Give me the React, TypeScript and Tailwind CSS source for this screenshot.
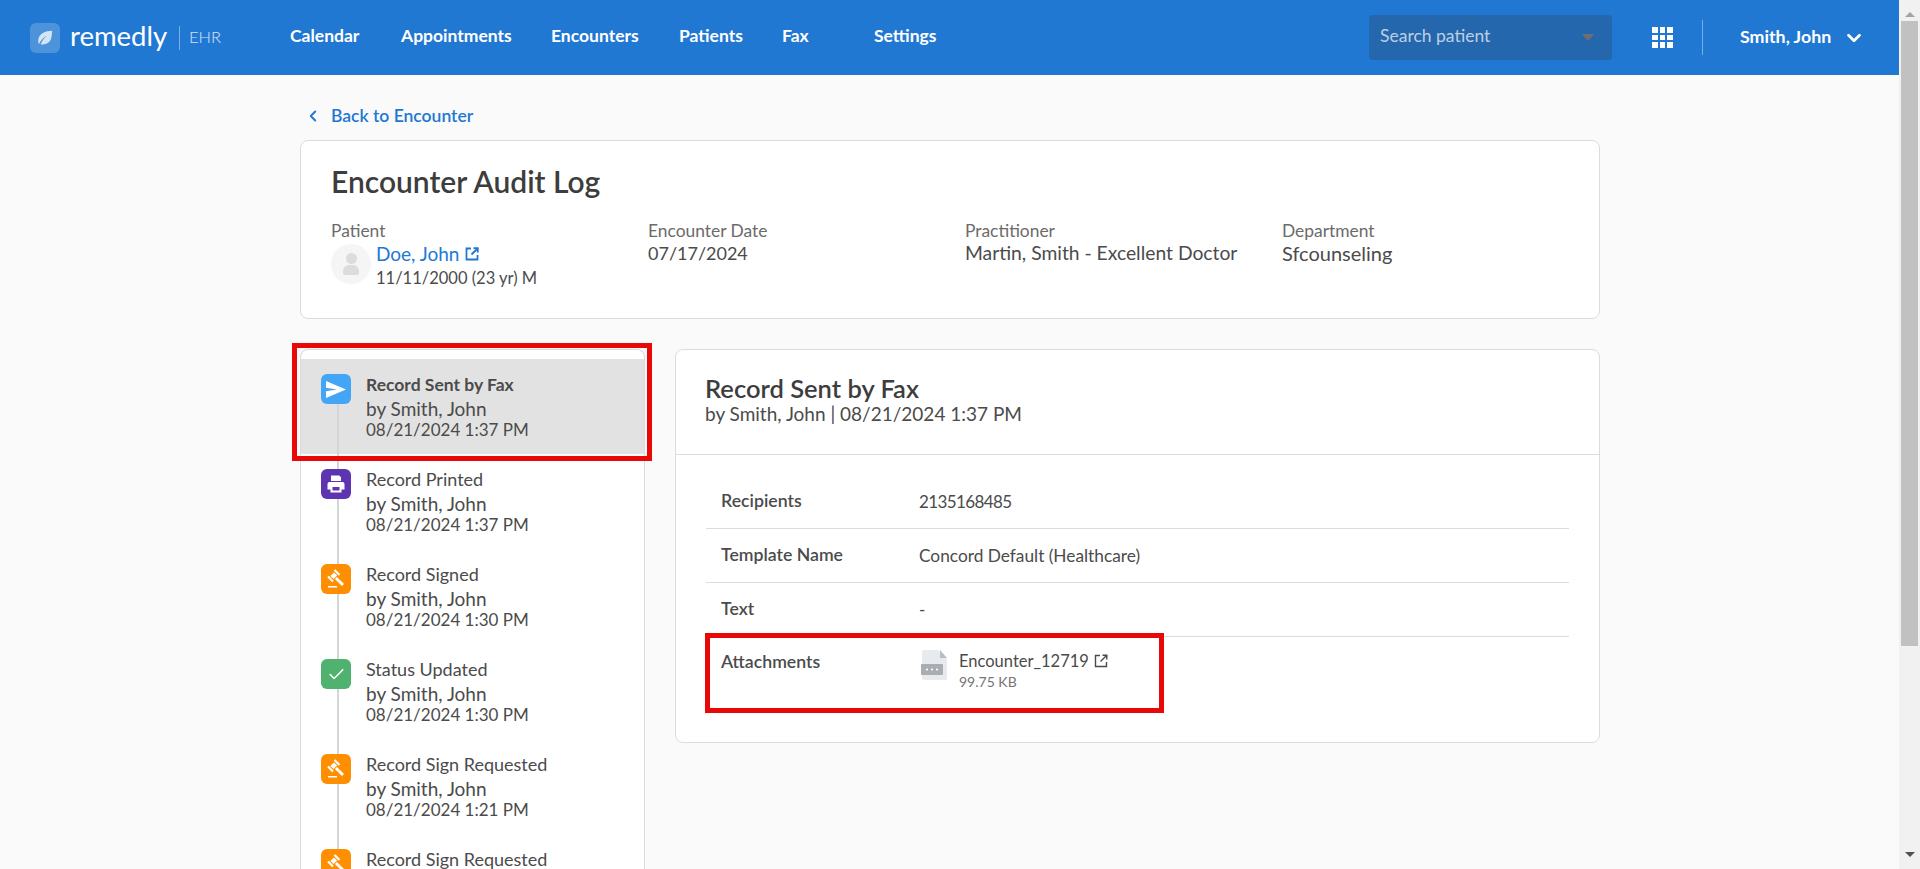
import { ChevronDown, ChevronLeft, Check } from 'lucide-react';

const navItems = [
  { label: 'Calendar', cls: 'w-[111px]' },
  { label: 'Appointments', cls: 'w-[150px]' },
  { label: 'Encounters', cls: 'w-[128px]' },
  { label: 'Patients', cls: 'w-[103px]' },
  { label: 'Fax', cls: 'w-[92px]' },
  { label: 'Settings', cls: 'w-[80px]' },
];

const SendIcon = () => (
  <svg viewBox="0 0 20 17" className="w-5 h-[17px]" fill="#fff">
    <path d="M0 0 20 8.500 0 17 0 10.300 11 8.500 0 6.700z" />
  </svg>
);

const PrintIcon = () => (
  <svg viewBox="0 0 20 20" className="w-5 h-5" fill="#fff">
    <path d="M5 1.500h8.200L15 3.300V7H5z" />
    <path fillRule="evenodd" d="M3.500 8h13A2 2 0 0 1 18.500 10v5.500h-3V18.500h-11V15.500h-3V10a2 2 0 0 1 2-2zM6.500 13v3.500h7V13z" />
  </svg>
);

const GavelIcon = () => (
  <svg viewBox="0 0 20 20" className="w-5 h-5" fill="#fff">
    <rect x="7.500" y="2.400" width="7" height="2.200" transform="rotate(45 11 3.500)" />
    <rect x="1" y="8.900" width="7" height="2.200" transform="rotate(45 4.500 10)" />
    <rect x="5.500" y="4.250" width="4.500" height="5" transform="rotate(45 7.750 6.750)" />
    <rect x="8.450" y="11" width="10" height="2.900" transform="rotate(45 13.450 12.450)" />
    <rect x="2" y="17" width="9" height="1.500" />
  </svg>
);

const ExternalIcon = ({ color, size, stroke }: { color: string; size: string; stroke: number }) => (
  <svg viewBox="0 0 14 14" className={size} stroke={color} strokeWidth={stroke} fill="none">
    <path d="M6 1.500H1.500v11h11V8" />
    <path d="M6.500 7.500 12.500 1.500M8.500 1.200h4.300v4.300" />
  </svg>
);

const events = [
  { title: 'Record Sent by Fax', time: '08/21/2024 1:37 PM', bg: 'bg-[#42a5f5]', icon: <SendIcon />, active: true },
  { title: 'Record Printed', time: '08/21/2024 1:37 PM', bg: 'bg-[#5e35b1]', icon: <PrintIcon /> },
  { title: 'Record Signed', time: '08/21/2024 1:30 PM', bg: 'bg-[#ff8f00]', icon: <GavelIcon /> },
  { title: 'Status Updated', time: '08/21/2024 1:30 PM', bg: 'bg-[#4fb26f]', icon: <Check className="w-[19px] h-[19px] text-white" strokeWidth={2} /> },
  { title: 'Record Sign Requested', time: '08/21/2024 1:21 PM', bg: 'bg-[#ff8f00]', icon: <GavelIcon /> },
  { title: 'Record Sign Requested', time: '08/21/2024 1:21 PM', bg: 'bg-[#ff8f00]', icon: <GavelIcon /> },
];

const details = [
  { label: 'Recipients', value: '2135168485', cls: 'text-[17px] tracking-[-0.6px]' },
  { label: 'Template Name', value: 'Concord Default (Healthcare)', cls: 'text-[17.300px]' },
  { label: 'Text', value: '-', cls: 'text-[17px]' },
];

const Header = () => (
  <header className="h-[75px] shrink-0 bg-[#2178d2] flex items-center text-white">
    <div className="w-[30px] h-[30px] ml-[30px] rounded-[6px] bg-white/20 flex items-center justify-center">
      <svg viewBox="0 0 20 20" className="w-[18px] h-[18px]" fill="#fff" fillOpacity={0.75}>
        <path d="M18 2C10 2 3.500 5 2.500 12c-.2 1.600 0 3.300.7 5 2-4.500 5-7.500 9-9.500-3 2.500-5.500 5.500-7 9.500 6 1 11-2 12-8 .4-2.300.6-4.700.8-7z" />
      </svg>
    </div>
    <span className="ml-[10px] w-[109px] text-[27.500px] leading-none font-normal pb-[3px]">remedly</span>
    <div className="w-px h-[24px] bg-white/40" />
    <span className="ml-[9px] w-[101px] text-[16.500px] font-light text-white/80">EHR</span>
    <nav className="flex">
      {navItems.map((n) => (
        <a key={n.label} className={`${n.cls} text-[17.500px] font-bold pb-[2px] cursor-pointer`}>{n.label}</a>
      ))}
    </nav>
    <div className="ml-[415px] w-[243px] h-[45px] rounded-[4px] bg-[#2467ad] flex items-center justify-between pl-[11px] pr-[18px]">
      <span className="text-[17.500px] text-white/70 pb-[2px]">Search patient</span>
      <span className="w-0 h-0 border-x-[6px] border-x-transparent border-t-[7px] border-t-[#6e6e6e]" />
    </div>
    <div className="ml-[40px] w-[21px] grid grid-cols-3 gap-[2px]">
      {Array.from({ length: 9 }).map((_, i) => (
        <span key={i} className="h-[5.400px] bg-white" />
      ))}
    </div>
    <div className="ml-[29px] w-px h-[35px] bg-white/40" />
    <span className="ml-[37px] text-[17.800px] font-bold pb-[2px]">Smith, John</span>
    <ChevronDown className="ml-[12px] w-[22px] h-[22px] text-white" strokeWidth={3} />
  </header>
);

const SummaryCard = () => (
  <section className="h-[179px] rounded-[8px] border border-[#dcdcdc] bg-white pl-[30px] pt-[21px]">
    <h1 className="text-[30px] leading-[38px] font-semibold text-[#3d3d3d]">Encounter Audit Log</h1>
    <div className="mt-[21px] grid grid-cols-[317px_317px_317px_1fr] text-[#4b4b4b]">
      <div>
        <div className="text-[17.400px] leading-[20px] text-[#6b6b6b]">Patient</div>
        <div className="flex gap-[5px]">
          <div className="w-[40px] h-[40px] mt-[3px] rounded-full bg-[#f5f5f5] flex flex-col items-center justify-center">
            <span className="w-[11px] h-[11px] rounded-full bg-[#dcdcdc]" />
            <span className="w-[16px] h-[10px] mt-[1px] rounded-t-[6px] rounded-b-[2px] bg-[#dcdcdc]" />
          </div>
          <div className="pt-[1px]">
            <div className="flex items-center gap-[6px] text-[19px] leading-[24px] text-[#2178d2]">
              Doe, John
              <ExternalIcon color="#2178d2" size="w-[14px] h-[14px]" stroke={1.800} />
            </div>
            <div className="text-[16.500px] leading-[25px]">11/11/2000 (23 yr) M</div>
          </div>
        </div>
      </div>
      <div>
        <div className="text-[17.400px] leading-[20px] text-[#6b6b6b]">Encounter Date</div>
        <div className="text-[18px] leading-[24px]">07/17/2024</div>
      </div>
      <div>
        <div className="text-[17.400px] leading-[20px] text-[#6b6b6b]">Practitioner</div>
        <div className="text-[19.300px] leading-[24px]">Martin, Smith - Excellent Doctor</div>
      </div>
      <div>
        <div className="text-[17.400px] leading-[20px] text-[#6b6b6b]">Department</div>
        <div className="text-[20px] leading-[24px]">Sfcounseling</div>
      </div>
    </div>
  </section>
);

const Timeline = () => (
  <div className="relative w-[345px] shrink-0">
    <div className="h-[520px] rounded-t-[8px] border border-b-0 border-[#dcdcdc] bg-white pt-[9px] overflow-hidden">
      {events.map((e, i) => (
        <div key={i} className={`relative h-[95px] ${i === 0 ? 'bg-[#e2e2e2]' : ''}`}>
          {i < events.length - 1 && <span className="absolute left-[36px] top-[45px] h-[95px] w-[2px] bg-[#d5d5d5]" />}
          <div className="relative flex pt-[15px] pl-[20px]">
            <div className={`w-[30px] h-[30px] rounded-[6px] shrink-0 flex items-center justify-center ${e.bg}`}>{e.icon}</div>
            <div className="ml-[15px] leading-[21px] text-[#4b4b4b]">
              <div className={`mb-[3px] ${e.active ? 'font-bold text-[17.500px]' : 'text-[18px]'}`}>{e.title}</div>
              <div className="text-[19px]">by Smith, John</div>
              <div className="text-[17px]">{e.time}</div>
            </div>
          </div>
        </div>
      ))}
    </div>
    <div className="absolute -left-[8px] -top-[6px] w-[360px] h-[118px] border-[5px] border-[#e80808]" />
  </div>
);

const DetailCard = () => (
  <section className="relative h-[394px] flex-1 rounded-[8px] border border-[#dcdcdc] bg-white">
    <div className="h-[105px] border-b border-[#dcdcdc] pl-[29px] pt-[23px]">
      <h2 className="text-[25.500px] leading-[30px] font-semibold text-[#3d3d3d]">Record Sent by Fax</h2>
      <p className="text-[19px] leading-[22px] text-[#4b4b4b]">by Smith, John | 08/21/2024 1:37 PM</p>
    </div>
    <div className="mx-[30px] mt-[20px] text-[#4b4b4b]">
      {details.map((d) => (
        <div key={d.label} className="h-[54px] border-b border-[#dcdcdc] flex items-center pl-[15px]">
          <span className="w-[198px] text-[17.700px] font-semibold">{d.label}</span>
          <span className={d.cls}>{d.value}</span>
        </div>
      ))}
      <div className="flex pl-[15px] pt-[12px]">
        <span className="w-[198px] text-[17.700px] font-semibold">Attachments</span>
        <div className="flex ml-[2px] mt-[1px]">
          <svg viewBox="0 0 26 30" className="w-[26px] h-[30px]">
            <path d="M3 0h14l9 9v19a2 2 0 0 1-2 2H3a2 2 0 0 1-2-2V2a2 2 0 0 1 2-2z" fill="#e8ebee" />
            <path d="M19 0l7 8h-7z" fill="#b8bec5" />
            <rect x="0" y="14" width="22" height="11" rx="1" fill="#a9aeb3" />
            <circle cx="6" cy="19.500" r="1.100" fill="#fff" />
            <circle cx="11" cy="19.500" r="1.100" fill="#fff" />
            <circle cx="16" cy="19.500" r="1.100" fill="#fff" />
          </svg>
          <div className="ml-[12px]">
            <div className="flex items-center gap-[5px] text-[16.500px] leading-[22px]">
              Encounter_12719
              <ExternalIcon color="#4b4b4b" size="w-[14px] h-[14px]" stroke={1.400} />
            </div>
            <div className="text-[14px] leading-[20px] text-[#757575]">99.75 KB</div>
          </div>
        </div>
      </div>
    </div>
    <div className="absolute left-[29px] top-[283px] w-[459px] h-[80px] border-[5px] border-[#e80808]" />
  </section>
);

const Scrollbar = () => (
  <div className="w-[21px] shrink-0 bg-[#f1f1f1] flex flex-col items-center px-[2px]">
    <div className="h-[17px] flex items-end"><span className="w-0 h-0 border-x-[5px] border-x-transparent border-b-[5px] border-b-[#a3a3a3]" /></div>
    <div className="w-full h-[625px] mt-[4px] bg-[#c1c1c1]" />
    <div className="flex-1" />
    <div className="h-[17px] flex items-start"><span className="w-0 h-0 border-x-[5px] border-x-transparent border-t-[5px] border-t-[#505050]" /></div>
  </div>
);

const App = () => {
  return (
    <div className="h-screen overflow-hidden flex bg-[#fafafa] font-['Lato','Liberation_Sans',sans-serif]">
      <div className="flex-1 min-w-0 flex flex-col">
        <Header />
        <main className="pl-[300px] pr-[299px]">
          <a className="h-[65px] flex items-center pl-[4px] pt-[17px] text-[17.500px] font-semibold text-[#2178d2]">
            <ChevronLeft className="w-[18px] h-[18px]" strokeWidth={2.500} />
            <span className="ml-[9px]">Back to Encounter</span>
          </a>
          <SummaryCard />
          <div className="flex mt-[30px] gap-[30px]">
            <Timeline />
            <DetailCard />
          </div>
        </main>
      </div>
      <Scrollbar />
    </div>
  );
};

export default App;
